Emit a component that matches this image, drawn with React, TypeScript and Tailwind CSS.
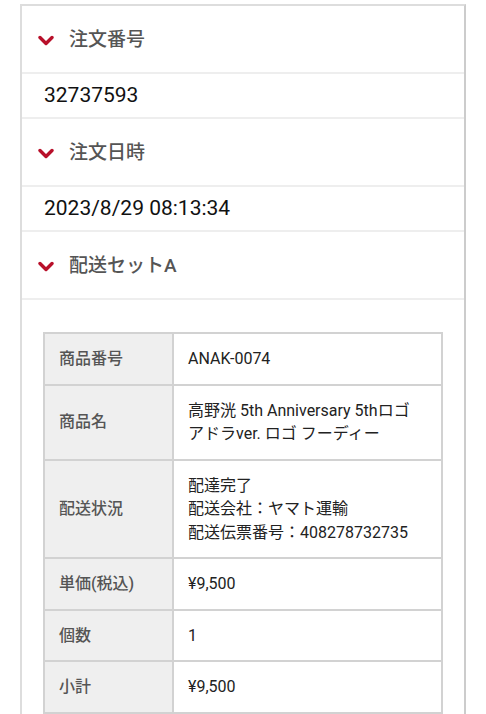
import React from "react";

function Chevron() {
  return (
    <svg width="16" height="11" viewBox="0 0 16 11" className="shrink-0">
      <polyline
        points="2,2.5 8,8.5 14,2.5"
        fill="none"
        stroke="#b8102a"
        strokeWidth="3.4"
        strokeLinecap="round"
        strokeLinejoin="round"
      />
    </svg>
  );
}

function Heading({ label }: { label: string }) {
  return (
    <div className="flex h-[68px] items-center gap-[15px] border-b-2 border-[#eeeeee] pl-[16px] pt-[3px]">
      <Chevron />
      <span className="text-[19px] font-medium text-[#555555]">{label}</span>
    </div>
  );
}

function Value({ text }: { text: string }) {
  return (
    <div className="flex h-[45px] items-center border-b-2 border-[#eeeeee] pl-[22px] text-[21px] text-[#111111]">
      {text}
    </div>
  );
}

const rows: { label: string; value: React.ReactNode }[] = [
  { label: "商品番号", value: "ANAK-0074" },
  {
    label: "商品名",
    value: (
      <>
        高野洸 5th Anniversary 5thロゴ
        <br />
        アドラver. ロゴ フーディー
      </>
    ),
  },
  {
    label: "配送状況",
    value: (
      <>
        配達完了
        <br />
        配送会社：ヤマト運輸
        <br />
        配送伝票番号：408278732735
      </>
    ),
  },
  { label: "単価(税込)", value: "¥9,500" },
  { label: "個数", value: "1" },
  { label: "小計", value: "¥9,500" },
];

export default function App() {
  return (
    <div
      className="min-h-[714px] bg-white px-[20px] pt-[4px]"
      style={{ fontFamily: 'Roboto, "Noto Sans CJK JP", sans-serif' }}
    >
      <div className="min-h-[720px] border-x-2 border-t-2 border-l-[#dddddd] border-r-[#cccccc] border-t-[#dddddd]">
        <Heading label="注文番号" />
        <Value text="32737593" />
        <Heading label="注文日時" />
        <Value text="2023/8/29 08:13:34" />
        <Heading label="配送セットA" />

        <div className="px-[21px] pt-[32px]">
          <table className="w-full border-collapse border-2 border-[#d2d2d2] text-[16px] leading-[23.5px]">
            <tbody>
              {rows.map((r) => (
                <tr key={r.label}>
                  <th className="w-[129px] border-2 border-[#d2d2d2] bg-[#efefef] py-[13px] pl-[14px] text-left align-middle font-medium text-[#555555]">
                    {r.label}
                  </th>
                  <td className="border-2 border-[#d2d2d2] py-[13px] pl-[14px] align-middle text-[#222222]">
                    {r.value}
                  </td>
                </tr>
              ))}
            </tbody>
          </table>
        </div>
      </div>
    </div>
  );
}
